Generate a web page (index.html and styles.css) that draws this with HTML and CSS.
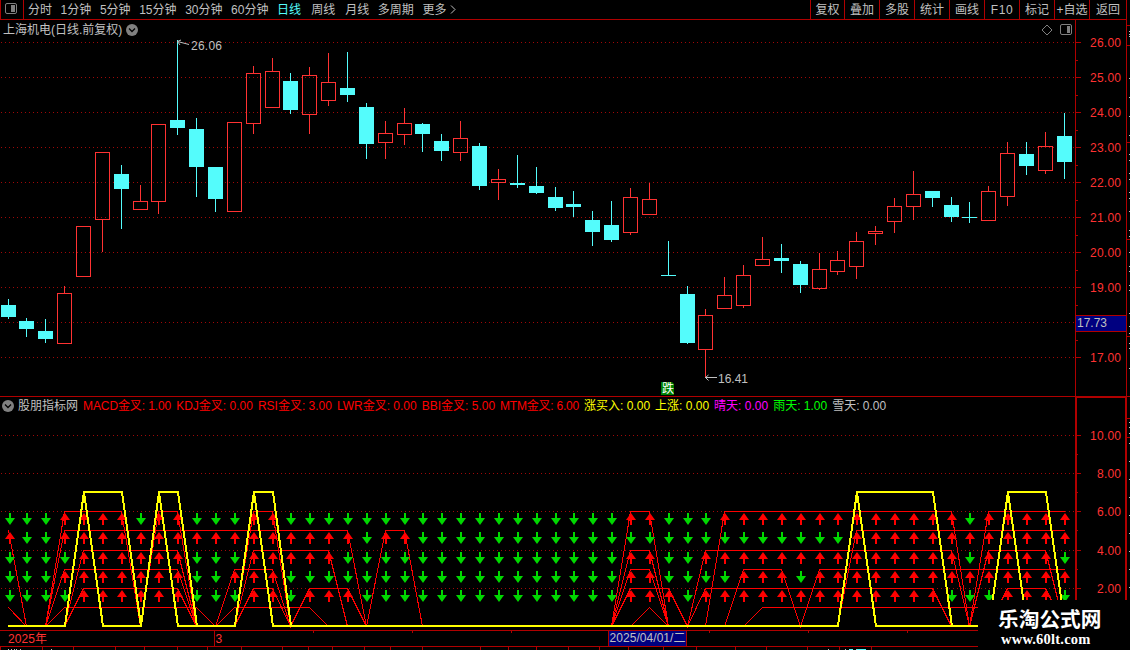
FILE: index.html
```html
<!DOCTYPE html>
<html lang="zh-CN">
<head>
    <meta charset="UTF-8">
    <meta name="viewport" content="width=device-width, initial-scale=1.0">
    <title>上海机电 - 日线</title>
    <link rel="stylesheet" href="styles.css">
</head>
<body>
    <div class="toolbar">
        <div class="layout-button">
            <svg width="14" height="12" viewBox="0 0 14 12">
                <rect x="1.5" y="0.5" width="11" height="10" rx="1.5" fill="none" stroke="#808080"/>
                <rect x="7" y="2" width="4" height="7" fill="#808080"/>
            </svg>
        </div>
        <div class="periods">
            <span>分时</span>
            <span>1分钟</span>
            <span>5分钟</span>
            <span>15分钟</span>
            <span>30分钟</span>
            <span>60分钟</span>
            <span class="short active">日线</span>
            <span class="short">周线</span>
            <span>月线</span>
            <span>多周期</span>
            <span class="more">更多
                <svg width="6" height="9" viewBox="0 0 6 9"><path d="M1 0.5L5 4.5L1 8.5" fill="none" stroke="#c0c0c0"/></svg>
            </span>
        </div>
        <div class="tools">
            <span>复权</span>
            <span>叠加</span>
            <span>多股</span>
            <span>统计</span>
            <span>画线</span>
            <span class="latin">F10</span>
            <span>标记</span>
            <span class="custom">+自选</span>
            <span class="back">返回</span>
        </div>
    </div>

    <div class="price-panel">
        <svg id="price" width="1130" height="376" viewBox="0 20 1130 376"></svg>
        <div class="stock-title">
            <span>上海机电(日线.前复权)</span>
            <svg width="12" height="12" viewBox="0 0 12 12">
                <circle cx="6" cy="6" r="6" fill="#808080"/>
                <path d="M3 4.5L6 7.5L9 4.5" fill="none" stroke="#000" stroke-width="1.3"/>
            </svg>
        </div>
        <div class="panel-icons">
            <svg width="12" height="12" viewBox="0 0 12 12"><path d="M6 1L11 6L6 11L1 6Z" fill="none" stroke="#808080"/></svg>
            <svg width="12" height="12" viewBox="0 0 12 12">
                <rect x="0.5" y="0.5" width="11" height="10" rx="1.5" fill="none" stroke="#808080"/>
                <rect x="7" y="2" width="3" height="7" fill="#808080"/>
            </svg>
        </div>
    </div>

    <div class="signal-panel">
        <svg id="signals" width="1130" height="254" viewBox="0 396 1130 254"></svg>
        <div class="legend">
            <svg width="12" height="12" viewBox="0 0 12 12">
                <circle cx="6" cy="6" r="6" fill="#808080"/>
                <path d="M3 4.5L6 7.5L9 4.5" fill="none" stroke="#000" stroke-width="1.3"/>
            </svg>
            <span class="name">股朋指标网</span>
            <span class="red macd">MACD金叉: 1.00</span>
            <span class="red">KDJ金叉: 0.00</span>
            <span class="red">RSI金叉: 3.00</span>
            <span class="red">LWR金叉: 0.00</span>
            <span class="red">BBI金叉: 5.00</span>
            <span class="red mtm">MTM金叉: 6.00</span>
            <span class="yellow">涨买入: 0.00</span>
            <span class="yellow">上涨: 0.00</span>
            <span class="magenta">晴天: 0.00</span>
            <span class="green">雨天: 1.00</span>
            <span>雪天: 0.00</span>
        </div>
        <div class="site-mark">
            <div class="site-name">乐淘公式网</div>
            <div class="site-url">www.60lt.com</div>
        </div>
    </div>

    <script src="chart.js"></script>
</body>
</html>
```
FILE: styles.css
```css
* {
    box-sizing: border-box;
}

body {
    margin: 0;
    width: 1130px;
    height: 650px;
    overflow: hidden;
    background-color: #000;
    color: #c0c0c0;
    font-family: "Liberation Sans", "Noto Sans CJK SC", sans-serif;
    font-size: 12px;
    display: flex;
    flex-direction: column;
}

svg {
    display: block;
}

.toolbar {
    display: flex;
    width: 1127px;
    height: 20px;
    flex: none;
    border: solid #b00000;
    border-width: 0 1px 1px 1px;
    line-height: 20px;
    white-space: nowrap;
}

.layout-button {
    width: 23px;
    padding: 3px 0 0 3px;
    border-right: 1px solid #b00000;
}

.periods {
    display: flex;
    gap: 8.6px;
    padding-left: 4px;
    flex: 1;
}

.short {
    margin-right: 1.5px;
}

.active {
    color: #54fcfc;
}

.more {
    display: flex;
    align-items: center;
    gap: 4px;
}

.tools {
    display: flex;
}

.tools span {
    width: 35px;
    border-left: 1px solid #b00000;
    text-align: center;
}

.tools span:first-child {
    width: 34px;
}

.tools .latin {
    letter-spacing: 0.6px;
}

.tools .back {
    width: 37px;
}

.price-panel,
.signal-panel {
    position: relative;
    flex: none;
}

.stock-title {
    position: absolute;
    left: 3px;
    top: 1px;
    display: flex;
    align-items: center;
    gap: 4px;
    line-height: 18px;
}

.panel-icons {
    position: absolute;
    left: 1041px;
    top: 4px;
    display: flex;
    gap: 7px;
}

.legend {
    position: absolute;
    left: 2px;
    top: 0;
    display: flex;
    align-items: center;
    gap: 5px;
    line-height: 20px;
    white-space: nowrap;
}

.legend .name {
    margin-left: -1px;
}

.legend .macd {
    letter-spacing: -0.1px;
}

.legend .mtm {
    letter-spacing: -0.22px;
}

.red {
    color: #f00;
}

.yellow {
    color: #ff0;
}

.magenta {
    color: #f0f;
}

.green {
    color: #0f0;
}

.site-mark {
    position: absolute;
    right: 0;
    bottom: 0;
    width: 152px;
    height: 50px;
    padding: 7px 0 0 20px;
    background-color: #000;
    color: #fff;
}

.site-name {
    font-size: 20.7px;
    font-weight: 700;
    line-height: 26px;
}

.site-url {
    padding-left: 3px;
    font-family: "Liberation Serif", serif;
    font-size: 14.5px;
    font-weight: 700;
    letter-spacing: 0.22px;
    line-height: 12px;
}

svg text {
    font-size: 12px;
    fill: #c0c0c0;
}

svg .axis-label {
    fill: #ff3232;
}

svg .badge-label {
    fill: #fff;
}
```
FILE: chart.js
```js
const AXIS = '#b00000';
const RED = '#ff3232';
const CYAN = '#54fcfc';

// [high, bodyTop, bodyBottom, low, rising]
const candles = [
    [299, 305, 317, 319, 0], [318, 321, 329, 337, 0], [319, 331, 339, 343, 0], [286, 293, 344, 344, 1],
    [226, 226, 277, 277, 1], [152, 152, 220, 252, 1], [165, 174, 189, 229, 0], [185, 201, 210, 210, 1],
    [124, 124, 202, 214, 1], [40, 120, 128, 135, 0], [118, 129, 167, 197, 0], [167, 167, 199, 212, 0],
    [122, 122, 212, 212, 1], [66, 73, 124, 134, 1], [58, 71, 108, 108, 1], [73, 81, 110, 114, 0],
    [67, 75, 115, 134, 1], [53, 82, 101, 106, 1], [52, 88, 95, 102, 0], [103, 107, 144, 159, 0],
    [121, 133, 143, 159, 1], [108, 123, 135, 145, 1], [123, 124, 134, 152, 0], [134, 141, 151, 161, 0],
    [121, 138, 153, 161, 1], [143, 146, 186, 190, 0], [169, 179, 183, 200, 1], [155, 183, 185, 188, 0],
    [167, 186, 193, 194, 0], [187, 197, 208, 211, 0], [191, 204, 207, 217, 0], [211, 220, 232, 246, 0],
    [201, 225, 240, 242, 0], [188, 197, 233, 235, 1], [183, 199, 215, 215, 1], [241, 275, 276, 276, 0],
    [286, 294, 343, 344, 0], [309, 315, 350, 377, 1], [277, 295, 309, 309, 1], [265, 275, 306, 308, 1],
    [237, 259, 266, 266, 1], [244, 258, 261, 273, 0], [261, 264, 285, 293, 0], [253, 269, 289, 290, 1],
    [251, 260, 272, 275, 1], [232, 241, 267, 279, 1], [226, 231, 234, 245, 1], [198, 206, 222, 233, 1],
    [171, 194, 207, 220, 1], [191, 191, 198, 207, 0], [197, 205, 217, 222, 0], [202, 217, 218, 223, 0],
    [186, 191, 221, 221, 1], [142, 153, 197, 206, 1], [142, 154, 166, 175, 0], [132, 146, 171, 174, 1],
    [113, 136, 162, 179, 0]
];

// first and last bar of every stretch where the signal is on
const rows = [
    { value: 1, on: [[0, 0], [3, 10], [12, 16], [34, 34], [40, 56]] },
    { value: 2, on: [[4, 9], [13, 14], [16, 18], [33, 35], [37, 49], [53, 55]] },
    { value: 3, on: [[3, 9], [12, 14], [33, 34], [39, 41], [43, 56]] },
    { value: 4, on: [[4, 9], [13, 17], [33, 34], [37, 50], [52, 55]] },
    { value: 5, on: [[0, 0], [3, 18], [20, 21], [45, 56]] },
    { value: 6, on: [[3, 6], [8, 9], [13, 14], [33, 34], [38, 50], [52, 56]] }
];
const rise = [[4, 6], [8, 9], [13, 14], [45, 49], [53, 55]];
const buy = [[4, 4], [8, 8], [13, 13], [45, 45], [53, 53]];
const levels = [626, 607, 588, 569, 550, 530, 511, 492];

const barX = i => Math.floor(8 + i * 18.8625);
const isOn = (ranges, i) => ranges.some(([a, b]) => i >= a && i <= b);
const box = (x, y, w, h, fill) => `<rect x="${x}" y="${y}" width="${w}" height="${h}" fill="${fill}"/>`;
const label = (x, y, str, len, cls = '') =>
    `<text x="${x}" y="${y}" class="${cls}"${len ? ` textLength="${len}"` : ''}>${str}</text>`;
const grid = y => `<path d="M1 ${y + 0.5}H1075" stroke="#a00808" stroke-dasharray="1 3"/>`;

function drawPrice() {
    let out = '';
    for (let i = 0; i < 10; i++) {
        const y = 42 + i * 35;
        out += grid(y) + box(1075, y, 6, 1, AXIS);
        if (i < 9) out += box(1075, y + 18, 3, 1, AXIS);
        if (i !== 8) out += label(1090, y + 5, (26 - i) + '.00', 31, 'axis-label');
    }
    out += box(1075, 20, 1, 376, AXIS) + box(1126, 20, 1, 376, AXIS);

    candles.forEach(([high, top, bottom, low, rising], i) => {
        const x = barX(i);
        if (rising) {
            out += box(x, high, 1, top - high, RED) + box(x, bottom, 1, low - bottom, RED);
            out += `<rect x="${x - 6.5}" y="${top + 0.5}" width="14" height="${bottom - top - 1}" fill="none" stroke="${RED}"/>`;
        } else {
            out += box(x, high, 1, low - high, CYAN) + box(x - 7, top, 15, bottom - top, CYAN);
        }
    });

    // highest and lowest price
    out += '<path d="M177.5 41.5L189 44.5M177.5 41.5L181 40M177.5 41.5L180 45" fill="none" stroke="#c0c0c0"/>';
    out += label(191, 50, '26.06', 31);
    out += '<path d="M705 377.5H717M705.5 377.5L708.5 375M705.5 377.5L708.5 380.5" fill="none" stroke="#c0c0c0"/>';
    out += label(718, 383, '16.41', 30);

    out += '<path d="M661 382H672L674 384V395H661Z" fill="#008000"/>' + label(662, 393, '跌', 0, 'badge-label');

    // cursor price
    out += box(1076, 315, 50, 17, AXIS) + box(1076, 316, 50, 15, '#000080') + label(1077, 327, '17.73', 30);

    [25, 45, 142, 239, 336].forEach(y => out += box(1127, y, 3, 1, AXIS));
    [31, 34, 36, 78, 97, 116, 135, 154, 160, 173, 179, 192, 198, 211, 230, 236, 252, 266, 271, 285, 290, 313, 326, 333, 343, 348, 368]
        .forEach(y => out += box(1129, y, 1, 1, '#c0c0c0'));
    document.getElementById('price').innerHTML = out;
}

function arrow(x, y, up) {
    const tip = up ? y : y + 12;
    const base = up ? y + 7 : y + 5;
    const stem = up ? y + 6 : y;
    const fill = up ? '#f00' : '#00d800';
    return `<path d="M${x} ${tip}L${x + 5} ${base}H${x - 5}Z" fill="${fill}"/>` + box(x - 1, stem, 2, 6, fill);
}

function trace(ranges, value) {
    return candles.map((c, i) => `${barX(i) + 0.5},${levels[isOn(ranges, i) ? value : 0] + 0.5}`).join(' ');
}

function drawSignals() {
    let out = box(0, 396, 1130, 1, AXIS) + box(1075, 397, 52, 1, AXIS);
    [435, 473, 511, 550, 588].forEach((y, i) => {
        out += grid(y) + box(1077, y, 4, 1, AXIS);
        const str = (10 - i * 2) + '.00';
        out += label(i ? 1097 : 1090, y + 5, str, i ? 24 : 31, 'axis-label');
    });
    [454, 492, 530, 569].forEach(y => out += box(1077, y, 1, 1, AXIS));
    out += box(1075, 397, 2, 233, AXIS) + box(1125, 397, 2, 233, AXIS);

    rows.forEach(({ value, on }) => {
        out += `<polyline points="${trace(on, value)}" fill="none" stroke="#f00" shape-rendering="crispEdges"/>`;
    });
    rows.slice(1).forEach(({ value, on }) => {
        candles.forEach((c, i) => {
            out += arrow(i ? barX(i) + 1 : 10, levels[value] + 2, isOn(on, i));
        });
    });
    [buy, rise].forEach(on => {
        const points = candles.map((c, i) => `${barX(i) + (i ? 1 : 0)},${isOn(on, i) ? 492 : 626}`).join(' ');
        out += `<polyline points="${points}" fill="none" stroke="#ff0" stroke-width="2" shape-rendering="crispEdges"/>`;
    });

    // date axis
    out += box(0, 630, 978, 1, AXIS) + box(0, 646, 978, 1, AXIS) + box(214, 630, 1, 16, AXIS);
    [313, 412, 511, 709, 808, 907].forEach(x => out += box(x, 631, 1, 2, AXIS));
    [0, 42, 73, 115, 144, 177, 207, 241, 282, 308, 332, 364, 390, 422, 480, 508, 536, 568, 599, 628, 663, 696, 735, 766, 807, 839, 871]
        .forEach(x => out += box(x, 647, 1, 3, AXIS));
    out += label(8, 643, '2025年', 39, 'axis-label') + label(215.5, 643, '3', 0, 'axis-label');
    out += box(608, 630, 79, 17, AXIS) + box(609, 631, 77, 15, '#000080') + label(609.5, 642, '2025/04/01/二', 76);
    [8, 11, 14, 16, 20, 51, 828, 845, 856].forEach(x => out += box(x, 649, 1, 1, '#c0c0c0'));
    out += box(849, 649, 4, 1, CYAN) + box(857, 649, 9, 1, CYAN);

    [418, 437].forEach(y => out += box(1127, y, 3, 1, AXIS));
    [422, 427, 433, 443, 461, 479, 497, 515, 533, 551, 569, 587].forEach(y => out += box(1129, y, 1, 1, '#c0c0c0'));
    document.getElementById('signals').innerHTML = out;
}

drawPrice();
drawSignals();
```
